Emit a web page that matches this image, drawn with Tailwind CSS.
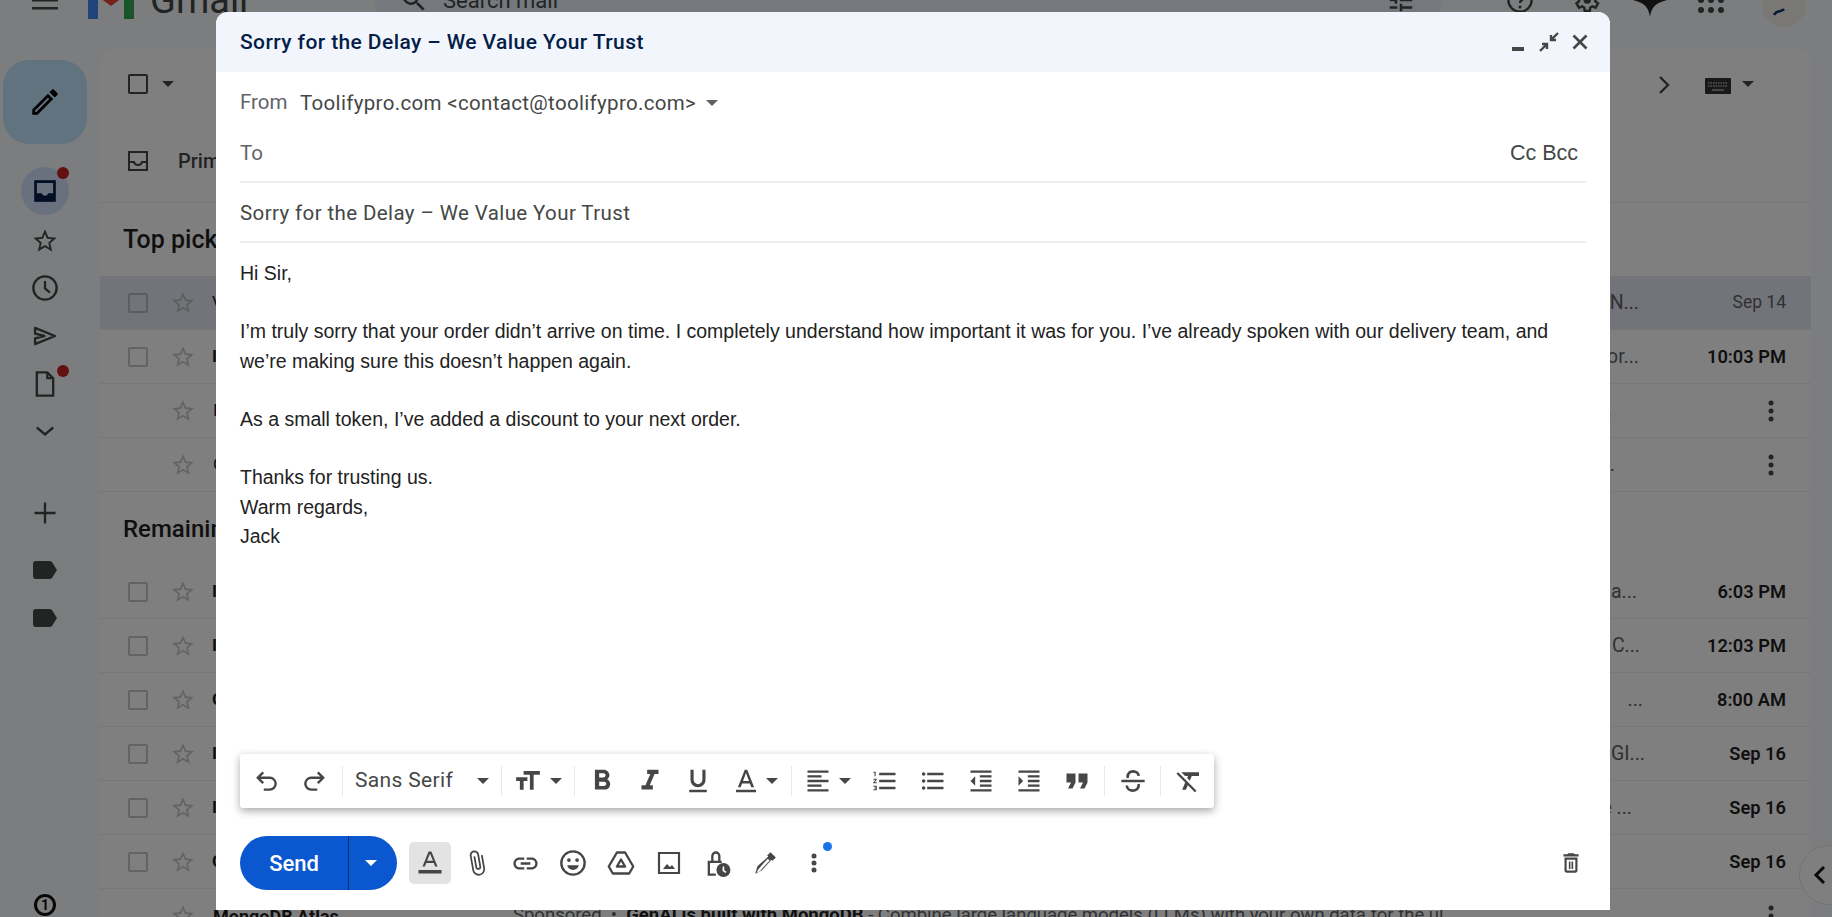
<!DOCTYPE html>
<html><head><meta charset="utf-8"><script src="https://cdn.jsdelivr.net/npm/@tailwindcss/browser@4"></script></head>
<body class="overflow-hidden">
<div class="relative w-[1832px] h-[917px] overflow-hidden bg-[#f8fafd] font-['Roboto',sans-serif] text-[#1f1f1f]">

<!-- top bar, scrolled mostly out of view -->
<header class="-mt-[30px] h-[60px] flex items-center text-[#444746]">
  <div class="w-[32px] shrink-0"></div>
  <svg class="w-[26px] h-[20px] shrink-0" viewBox="0 0 26 20"><path d="M0 1h26v2.600H0zM0 9h26v2.600H0zM0 17h26v2.600H0z" fill="#444746"/></svg>
  <svg class="w-[46px] h-[36px] ml-[30px] mt-[2px] shrink-0" viewBox="0 0 46 36"><path d="M0 4v32h10V12z" fill="#4285f4"/><path d="M36 12v24h10V4z" fill="#34a853"/><path d="M0 0v6l23 17L46 6V0L36 0 23 10 10 0z" fill="#ea4335"/></svg>
  <span class="ml-[16px] w-[225px] shrink-0 text-[38px] leading-none text-[#444746]">Gmail</span>
  <div class="w-[1067px] h-[56px] shrink-0 rounded-full bg-[#eaf1fb] flex items-center pl-[24px] pr-[26px]">
    <svg class="w-[30px] h-[30px] shrink-0" viewBox="0 0 24 24"><path d="M15.500 14h-.79l-.28-.27A6.470 6.470 0 0 0 16 9.500 6.500 6.500 0 1 0 9.500 16c1.610 0 3.090-.59 4.230-1.570l.27.28v.79l5 4.990L20.490 19l-4.990-5zm-6 0C7.010 14 5 11.990 5 9.500S7.010 5 9.500 5 14 7.010 14 9.500 11.990 14 9.500 14z" fill="#444746"/></svg>
    <span class="ml-[14px] text-[22px]">Search mail</span>
    <svg class="ml-auto w-[30px] h-[30px] shrink-0" viewBox="0 0 24 24"><path d="M3 17v2h6v-2H3zM3 5v2h10V5H3zm10 16v-2h8v-2h-8v-2h-2v6h2zM7 9v2H3v2h4v2h2V9H7zm14 4v-2H11v2h10zm-6-4h2V7h4V5h-4V3h-2v6z" fill="#444746"/></svg>
  </div>
  <div class="w-[64px] shrink-0"></div>
  <svg class="w-[28px] h-[28px] shrink-0" viewBox="0 0 24 24"><circle cx="12" cy="12" r="10" fill="none" stroke="#444746" stroke-width="2"/><path d="M9 9.500a3 3 0 1 1 4.500 2.600c-1 .6-1.500 1.200-1.500 2.400" fill="none" stroke="#444746" stroke-width="2"/><circle cx="12" cy="18" r="1.300" fill="#444746"/></svg>
  <svg class="w-[30px] h-[30px] ml-[37px] shrink-0" viewBox="0 0 24 24"><path d="M19.400 13a7.600 7.600 0 0 0 0-2l2.100-1.600-2-3.500-2.500 1a7.500 7.500 0 0 0-1.700-1L15 3.200h-4l-.4 2.700a7.500 7.500 0 0 0-1.700 1l-2.500-1-2 3.500L6.500 11a7.600 7.600 0 0 0 0 2l-2.100 1.600 2 3.500 2.500-1a7.500 7.500 0 0 0 1.700 1l.4 2.700h4l.4-2.700a7.500 7.500 0 0 0 1.700-1l2.500 1 2-3.500z" fill="none" stroke="#444746" stroke-width="2"/><circle cx="13" cy="12" r="3" fill="#444746"/></svg>
  <svg class="w-[34px] h-[44px] ml-[32px] shrink-0" viewBox="0 0 24 24"><path d="M12 0c1 7 4 10 12 12-8 2-11 5-12 12-1-7-4-10-12-12 8-2 11-5 12-12z" fill="#222"/></svg>
  <svg class="w-[26px] h-[26px] ml-[31px] shrink-0" viewBox="0 0 26 26"><g fill="#444746"><circle cx="3" cy="3" r="3"/><circle cx="13" cy="3" r="3"/><circle cx="23" cy="3" r="3"/><circle cx="3" cy="13" r="3"/><circle cx="13" cy="13" r="3"/><circle cx="23" cy="13" r="3"/><circle cx="3" cy="23" r="3"/><circle cx="13" cy="23" r="3"/><circle cx="23" cy="23" r="3"/></g></svg>
  <div class="w-[44px] h-[44px] ml-[38px] mt-[10px] shrink-0 rounded-full bg-[#f3f1ea] flex justify-center"><svg class="w-[24px] h-[14px] mt-[20px]" viewBox="0 0 24 14"><path d="M2 12c3-6 7-2 10-6" fill="none" stroke="#12306b" stroke-width="2.500"/></svg></div>
</header>

<div class="flex h-[887px]">
  <!-- sidebar -->
  <aside class="w-[100px] shrink-0 relative h-full">
    <div class="absolute left-[3px] top-[30px] w-[84px] h-[84px] rounded-[26px] bg-[#c2e7ff] flex items-center justify-center">
      <svg class="w-[34px] h-[34px]" viewBox="0 0 24 24"><path d="M3 17.250V21h3.750L17.810 9.940l-3.750-3.750L3 17.250zM5.920 19H5v-.92l9.060-9.060.92.92L5.920 19zM20.710 5.630l-2.340-2.340c-.2-.2-.45-.29-.71-.29s-.51.1-.7.29l-1.830 1.830 3.750 3.750 1.830-1.830c.39-.39.39-1.020 0-1.410z" fill="#000"/></svg>
    </div>
    <div class="absolute left-[21px] top-[137px] w-[48px] h-[48px] rounded-full bg-[#d3e3fd] flex items-center justify-center">
      <svg class="w-[26px] h-[26px]" viewBox="0 0 24 24"><path d="M2 2h20v20H2z" fill="#041e49"/><path d="M4.500 4.500h15v9.500h-4.500c-.5 1.500-1.500 2.300-3 2.300s-2.500-.8-3-2.300H4.500z" fill="#d3e3fd"/></svg>
      <div class="absolute left-[36px] top-[0px] w-[12px] h-[12px] rounded-full bg-[#c5221f]"></div>
    </div>
    <svg class="absolute left-[31px] top-[197px] w-[28px] h-[28px]" viewBox="0 0 24 24"><path d="M22 9.240l-7.190-.62L12 2 9.190 8.630 2 9.240l5.460 4.730L5.820 21 12 17.270 18.180 21l-1.630-7.030L22 9.240zM12 15.400l-3.760 2.270 1-4.280-3.320-2.880 4.380-.38L12 6.100l1.710 4.040 4.380.38-3.320 2.880 1 4.280L12 15.400z" fill="#444746"/></svg>
    <svg class="absolute left-[31px] top-[244px] w-[28px] h-[28px]" viewBox="0 0 24 24"><circle cx="12" cy="12" r="10" fill="none" stroke="#444746" stroke-width="2"/><path d="M12 6v6.300l4.200 3.700" fill="none" stroke="#444746" stroke-width="2"/></svg>
    <svg class="absolute left-[31px] top-[292px] w-[28px] h-[28px]" viewBox="0 0 24 24"><path d="M3.500 5l17 7-17 7V14l8-2-8-2z" fill="none" stroke="#444746" stroke-width="2" stroke-linejoin="round"/></svg>
    <svg class="absolute left-[31px] top-[340px] w-[28px] h-[28px]" viewBox="0 0 24 24"><path d="M5 2h9l5 5v15H5z M14 2v5h5" fill="none" stroke="#444746" stroke-width="2"/></svg>
    <div class="absolute left-[57px] top-[335px] w-[12px] h-[12px] rounded-full bg-[#c5221f]"></div>
    <svg class="absolute left-[31px] top-[387px] w-[28px] h-[28px]" viewBox="0 0 24 24"><path d="M5 9l7 6 7-6" fill="none" stroke="#444746" stroke-width="2"/></svg>
    <svg class="absolute left-[31px] top-[469px] w-[28px] h-[28px]" viewBox="0 0 24 24"><path d="M12 3v18M3 12h18" fill="none" stroke="#444746" stroke-width="2"/></svg>
    <svg class="absolute left-[33px] top-[530px] w-[24px] h-[20px]" viewBox="0 0 24 20"><path d="M3 1h13q2 0 3 1l5 8-5 8q-1 1-3 1H3q-3 0-3-3V4q0-3 3-3z" fill="#444746"/></svg>
    <svg class="absolute left-[33px] top-[578px] w-[24px] h-[20px]" viewBox="0 0 24 20"><path d="M3 1h13q2 0 3 1l5 8-5 8q-1 1-3 1H3q-3 0-3-3V4q0-3 3-3z" fill="#444746"/></svg>
    <div class="absolute left-[34px] top-[864px] w-[22px] h-[22px] rounded-full border-[3px] border-[#111] flex items-center justify-center text-[14px] font-bold leading-none text-[#111]">1</div>
  </aside>

  <!-- mail list -->
  <main class="w-[1711px] shrink-0 rounded-t-[18px] bg-white mt-[18px] h-[869px] overflow-hidden">
    <div class="h-[72px] flex items-center pl-[28px] pr-[57px]">
      <div class="w-[20px] h-[20px] border-2 border-[#444746] rounded-[2px]"></div>
      <svg class="w-[12px] h-[6px] ml-[14px]" viewBox="0 0 12 6"><path d="M0 0h12L6 6z" fill="#444746"/></svg>
      <svg class="w-[18px] h-[22px] ml-auto mr-[3px] mt-[1px]" viewBox="0 0 18 22"><path d="M5 3l8 8-8 8" fill="none" stroke="#444746" stroke-width="2.400"/></svg>
      <svg class="w-[26px] h-[16px] ml-[29px] mt-[3px]" viewBox="0 0 26 16"><rect width="26" height="16" rx="1" fill="#333"/><path d="M3 5h20M3 8h20" stroke="#aaa" stroke-width="1.500" stroke-dasharray="1.500 1"/><path d="M7 12h12" stroke="#aaa" stroke-width="1.500"/></svg>
      <svg class="w-[12px] h-[6px] ml-[11px]" viewBox="0 0 12 6"><path d="M0 0h12L6 6z" fill="#444746"/></svg>
    </div>
    <div class="h-[83px] flex items-center pl-[28px] border-b border-[#eceef1]">
      <svg class="w-[20px] h-[20px]" viewBox="0 0 20 20"><path d="M1 1h18v18H1zM1 11h5c.5 2 2 3 4 3s3.500-1 4-3h5" fill="none" stroke="#444746" stroke-width="2"/></svg>
      <span class="ml-[30px] text-[20px] font-medium text-[#444746]">Primary</span>
    </div>
    <div class="h-[73px] flex items-center pl-[23px] text-[25px] font-medium">Top picks</div>

    <div class="h-[54px] flex items-center pl-[28px] pr-[25px] bg-[#e4e9f2] border-b border-[#eceef1]">
      <div class="w-[20px] h-[20px] border-2 border-[#b8bbbf] rounded-[2px]"></div>
      <svg class="w-[26px] h-[26px] ml-[22px] shrink-0" viewBox="0 0 24 24"><path d="M22 9.240l-7.190-.62L12 2 9.190 8.630 2 9.240l5.460 4.730L5.820 21 12 17.270 18.180 21l-1.630-7.030L22 9.240zM12 15.400l-3.760 2.270 1-4.280-3.320-2.880 4.380-.38L12 6.100l1.710 4.040 4.380.38-3.320 2.880 1 4.280L12 15.400z" fill="#b8bbbf"/></svg>
      <span class="ml-[16px] w-[100px] shrink-0 text-[17px]">V</span>
      <span class="flex-1 text-right text-[19.500px] text-[#5f6368] truncate">N...</span>
      <span class="w-[147px] shrink-0 text-right text-[17.500px] text-[#5f6368]">Sep 14</span>
    </div>
    <div class="h-[54px] flex items-center pl-[28px] pr-[25px] border-b border-[#eceef1]">
      <div class="w-[20px] h-[20px] border-2 border-[#c4c7c9] rounded-[2px]"></div>
      <svg class="w-[26px] h-[26px] ml-[22px] shrink-0" viewBox="0 0 24 24"><path d="M22 9.240l-7.190-.62L12 2 9.190 8.630 2 9.240l5.460 4.730L5.820 21 12 17.270 18.180 21l-1.630-7.030L22 9.240zM12 15.400l-3.760 2.270 1-4.280-3.320-2.880 4.380-.38L12 6.100l1.710 4.040 4.380.38-3.320 2.880 1 4.280L12 15.400z" fill="#c4c7c9"/></svg>
      <span class="ml-[16px] w-[100px] shrink-0 text-[17px] font-bold">I</span>
      <span class="flex-1 text-right text-[19.500px] text-[#5f6368] truncate">or...</span>
      <span class="w-[147px] shrink-0 text-right text-[18.300px] font-semibold">10:03 PM</span>
    </div>
    <div class="h-[54px] flex items-center pl-[76px] pr-[37px] border-b border-[#eceef1]">
      <svg class="w-[26px] h-[26px] -ml-[6px] shrink-0" viewBox="0 0 24 24"><path d="M22 9.240l-7.190-.62L12 2 9.190 8.630 2 9.240l5.460 4.730L5.820 21 12 17.270 18.180 21l-1.630-7.030L22 9.240zM12 15.400l-3.760 2.270 1-4.280-3.320-2.880 4.380-.38L12 6.100l1.710 4.040 4.380.38-3.320 2.880 1 4.280L12 15.400z" fill="#c4c7c9"/></svg>
      <span class="ml-[17px] w-[100px] shrink-0 text-[17px]">I</span>
      <span class="flex-1 text-right text-[19.500px] text-[#5f6368] truncate">...</span>
      <div class="w-[162px] shrink-0 flex justify-end"><svg class="w-[6px] h-[22px]" viewBox="0 0 6 22"><g fill="#444746"><circle cx="3" cy="3" r="2.500"/><circle cx="3" cy="11" r="2.500"/><circle cx="3" cy="19" r="2.500"/></g></svg></div>
    </div>
    <div class="h-[54px] flex items-center pl-[76px] pr-[37px] border-b border-[#eceef1]">
      <svg class="w-[26px] h-[26px] -ml-[6px] shrink-0" viewBox="0 0 24 24"><path d="M22 9.240l-7.190-.62L12 2 9.190 8.630 2 9.240l5.460 4.730L5.820 21 12 17.270 18.180 21l-1.630-7.030L22 9.240zM12 15.400l-3.760 2.270 1-4.280-3.320-2.880 4.380-.38L12 6.100l1.710 4.040 4.380.38-3.320 2.880 1 4.280L12 15.400z" fill="#c4c7c9"/></svg>
      <span class="ml-[17px] w-[100px] shrink-0 text-[17px]">G</span>
      <span class="flex-1 text-right text-[19.500px] text-[#5f6368] truncate">...</span>
      <div class="w-[159px] shrink-0 flex justify-end"><svg class="w-[6px] h-[22px]" viewBox="0 0 6 22"><g fill="#444746"><circle cx="3" cy="3" r="2.500"/><circle cx="3" cy="11" r="2.500"/><circle cx="3" cy="19" r="2.500"/></g></svg></div>
    </div>

    <div class="h-[73px] flex items-center pl-[23px] text-[24px] font-medium">Remaining</div>

    <div class="h-[54px] flex items-center pl-[28px] pr-[25px] border-b border-[#eceef1]">
      <div class="w-[20px] h-[20px] border-2 border-[#c4c7c9] rounded-[2px]"></div>
      <svg class="w-[26px] h-[26px] ml-[22px] shrink-0" viewBox="0 0 24 24"><path d="M22 9.240l-7.190-.62L12 2 9.190 8.630 2 9.240l5.460 4.730L5.820 21 12 17.270 18.180 21l-1.630-7.030L22 9.240zM12 15.400l-3.760 2.270 1-4.280-3.320-2.880 4.380-.38L12 6.100l1.710 4.040 4.380.38-3.320 2.880 1 4.280L12 15.400z" fill="#c4c7c9"/></svg>
      <span class="ml-[16px] w-[100px] shrink-0 text-[17px] font-bold">I</span>
      <span class="flex-1 text-right text-[19.500px] text-[#5f6368] truncate">a...</span>
      <span class="w-[149px] shrink-0 text-right text-[18.300px] font-semibold">6:03 PM</span>
    </div>
    <div class="h-[54px] flex items-center pl-[28px] pr-[25px] border-b border-[#eceef1]">
      <div class="w-[20px] h-[20px] border-2 border-[#c4c7c9] rounded-[2px]"></div>
      <svg class="w-[26px] h-[26px] ml-[22px] shrink-0" viewBox="0 0 24 24"><path d="M22 9.240l-7.190-.62L12 2 9.190 8.630 2 9.240l5.460 4.730L5.820 21 12 17.270 18.180 21l-1.630-7.030L22 9.240zM12 15.400l-3.760 2.270 1-4.280-3.320-2.880 4.380-.38L12 6.100l1.710 4.040 4.380.38-3.320 2.880 1 4.280L12 15.400z" fill="#c4c7c9"/></svg>
      <span class="ml-[16px] w-[100px] shrink-0 text-[17px] font-bold">I</span>
      <span class="flex-1 text-right text-[19.500px] text-[#5f6368] truncate">C...</span>
      <span class="w-[146px] shrink-0 text-right text-[18.300px] font-semibold">12:03 PM</span>
    </div>
    <div class="h-[54px] flex items-center pl-[28px] pr-[25px] border-b border-[#eceef1]">
      <div class="w-[20px] h-[20px] border-2 border-[#c4c7c9] rounded-[2px]"></div>
      <svg class="w-[26px] h-[26px] ml-[22px] shrink-0" viewBox="0 0 24 24"><path d="M22 9.240l-7.190-.62L12 2 9.190 8.630 2 9.240l5.460 4.730L5.820 21 12 17.270 18.180 21l-1.630-7.030L22 9.240zM12 15.400l-3.760 2.270 1-4.280-3.320-2.880 4.380-.38L12 6.100l1.710 4.040 4.380.38-3.320 2.880 1 4.280L12 15.400z" fill="#c4c7c9"/></svg>
      <span class="ml-[16px] w-[100px] shrink-0 text-[17px] font-bold">G</span>
      <span class="flex-1 text-right text-[19.500px] text-[#5f6368] truncate">...</span>
      <span class="w-[143px] shrink-0 text-right text-[18.300px] font-semibold">8:00 AM</span>
    </div>
    <div class="h-[54px] flex items-center pl-[28px] pr-[25px] border-b border-[#eceef1]">
      <div class="w-[20px] h-[20px] border-2 border-[#c4c7c9] rounded-[2px]"></div>
      <svg class="w-[26px] h-[26px] ml-[22px] shrink-0" viewBox="0 0 24 24"><path d="M22 9.240l-7.190-.62L12 2 9.190 8.630 2 9.240l5.460 4.730L5.820 21 12 17.270 18.180 21l-1.630-7.030L22 9.240zM12 15.400l-3.760 2.270 1-4.280-3.320-2.880 4.380-.38L12 6.100l1.710 4.040 4.380.38-3.320 2.880 1 4.280L12 15.400z" fill="#c4c7c9"/></svg>
      <span class="ml-[16px] w-[100px] shrink-0 text-[17px] font-bold">I</span>
      <span class="flex-1 text-right text-[19.500px] text-[#5f6368] truncate">GI...</span>
      <span class="w-[141px] shrink-0 text-right text-[18.300px] font-semibold">Sep 16</span>
    </div>
    <div class="h-[54px] flex items-center pl-[28px] pr-[25px] border-b border-[#eceef1]">
      <div class="w-[20px] h-[20px] border-2 border-[#c4c7c9] rounded-[2px]"></div>
      <svg class="w-[26px] h-[26px] ml-[22px] shrink-0" viewBox="0 0 24 24"><path d="M22 9.240l-7.190-.62L12 2 9.190 8.630 2 9.240l5.460 4.730L5.820 21 12 17.270 18.180 21l-1.630-7.030L22 9.240zM12 15.400l-3.760 2.270 1-4.280-3.320-2.880 4.380-.38L12 6.100l1.710 4.040 4.380.38-3.320 2.880 1 4.280L12 15.400z" fill="#c4c7c9"/></svg>
      <span class="ml-[16px] w-[100px] shrink-0 text-[17px] font-bold">I</span>
      <span class="flex-1 text-right text-[19.500px] text-[#5f6368] truncate">e ...</span>
      <span class="w-[154px] shrink-0 text-right text-[18.300px] font-semibold">Sep 16</span>
    </div>
    <div class="h-[54px] flex items-center pl-[28px] pr-[25px] border-b border-[#eceef1]">
      <div class="w-[20px] h-[20px] border-2 border-[#c4c7c9] rounded-[2px]"></div>
      <svg class="w-[26px] h-[26px] ml-[22px] shrink-0" viewBox="0 0 24 24"><path d="M22 9.240l-7.190-.62L12 2 9.190 8.630 2 9.240l5.460 4.730L5.820 21 12 17.270 18.180 21l-1.630-7.030L22 9.240zM12 15.400l-3.760 2.270 1-4.280-3.320-2.880 4.380-.38L12 6.100l1.710 4.040 4.380.38-3.320 2.880 1 4.280L12 15.400z" fill="#c4c7c9"/></svg>
      <span class="ml-[16px] w-[100px] shrink-0 text-[17px] font-bold">G</span>
      <span class="flex-1"></span>
      <span class="w-[141px] shrink-0 text-right text-[18.300px] font-semibold">Sep 16</span>
    </div>
    <div class="h-[54px] flex items-center pl-[76px] pr-[37px] whitespace-nowrap">
      <svg class="w-[26px] h-[26px] -ml-[6px] shrink-0" viewBox="0 0 24 24"><path d="M22 9.240l-7.190-.62L12 2 9.190 8.630 2 9.240l5.460 4.730L5.820 21 12 17.270 18.180 21l-1.630-7.030L22 9.240zM12 15.400l-3.760 2.270 1-4.280-3.320-2.880 4.380-.38L12 6.100l1.710 4.040 4.380.38-3.320 2.880 1 4.280L12 15.400z" fill="#c4c7c9"/></svg>
      <span class="ml-[17px] w-[300px] shrink-0 text-[18px] font-bold">MongoDB Atlas</span>
      <span class="text-[18.500px] text-[#5f6368] truncate flex-1">Sponsored &nbsp;•&nbsp; <b class="text-[#1f1f1f]">GenAI is built with MongoDB</b> - Combine large language models (LLMs) with your own data for the ul</span>
      <svg class="w-[6px] h-[22px] shrink-0 ml-[12px]" viewBox="0 0 6 22"><g fill="#444746"><circle cx="3" cy="3" r="2.500"/><circle cx="3" cy="11" r="2.500"/><circle cx="3" cy="19" r="2.500"/></g></svg>
    </div>
  </main>
  <div class="flex-1"></div>
</div>

<!-- collapse tab -->
<div class="absolute left-[1799px] top-[845px] w-[60px] h-[60px] rounded-full bg-white border border-[#e6e6e6] flex items-center pl-[12px]">
  <svg class="w-[16px] h-[20px]" viewBox="0 0 16 20"><path d="M12 2l-8 8 8 8" fill="none" stroke="#111" stroke-width="3"/></svg>
</div>

<!-- dim -->
<div class="absolute inset-0 bg-black/50"></div>

<!-- compose window -->
<section class="absolute left-[216px] top-[12px] w-[1394px] h-[898px] bg-white rounded-t-[12px] flex flex-col font-['Roboto',sans-serif] overflow-hidden">
  <div class="h-[60px] shrink-0 bg-[#f2f6fc] flex items-center pl-[24px] pr-[22px]">
    <span class="pt-[2px] text-[21px] tracking-[0.4px] font-medium text-[#041e49]">Sorry for the Delay – We Value Your Trust</span>
    <svg class="ml-auto w-[14px] h-[14px] mt-[11px]" viewBox="0 0 14 14"><path d="M1 6h12v4H1z" fill="#444746"/></svg>
    <svg class="ml-[14px] w-[20px] h-[20px]" viewBox="0 0 20 20"><path d="M19 1l-7 7M12 3v5h5M1 19l7-7M3 12h5v5" fill="none" stroke="#444746" stroke-width="2.400"/></svg>
    <svg class="ml-[13px] w-[16px] h-[16px]" viewBox="0 0 16 16"><path d="M1.500 1.500l13 13M14.500 1.500l-13 13" fill="none" stroke="#444746" stroke-width="2.600"/></svg>
  </div>

  <div class="px-[24px] flex-1 flex flex-col min-h-0">
    <div class="h-[62px] shrink-0 flex items-center">
      <span class="text-[20.500px] text-[#5f6368] w-[60px] -mt-[2px]">From</span>
      <span class="text-[20.500px] tracking-[0.33px] text-[#444746]">Toolifypro.com &lt;contact@toolifypro.com&gt;</span>
      <svg class="ml-[10px] w-[12px] h-[6px]" viewBox="0 0 12 6"><path d="M0 0h12L6 6z" fill="#5f6368"/></svg>
    </div>
    <div class="h-[49px] shrink-0 flex items-center pb-[8px] border-b-2 border-[#eeeeee]">
      <span class="text-[20.500px] text-[#5f6368]">To</span>
      <span class="ml-auto mr-[8px] font-['Liberation_Sans',sans-serif] text-[21.500px] text-[#444746]">Cc Bcc</span>
    </div>
    <div class="h-[60px] shrink-0 flex items-center pt-[3px] border-b-2 border-[#eeeeee] text-[20.500px] tracking-[0.39px] text-[#444746]">Sorry for the Delay – We Value Your Trust</div>
    <div class="pt-[16px] font-['Liberation_Sans',sans-serif] text-[19.500px] leading-[29.200px] text-[#222222]">
      <div>Hi Sir,</div>
      <div class="h-[29.200px]"></div>
      <div>I’m truly sorry that your order didn’t arrive on time. I completely understand how important it was for you. I’ve already spoken with our delivery team, and<br>we’re making sure this doesn’t happen again.</div>
      <div class="h-[29.200px]"></div>
      <div>As a small token, I’ve added a discount to your next order.</div>
      <div class="h-[29.200px]"></div>
      <div>Thanks for trusting us.</div>
      <div>Warm regards,</div>
      <div>Jack</div>
    </div>

    <!-- format toolbar -->
    <div class="mt-auto w-[974px] h-[54px] shrink-0 rounded-[3px] bg-white shadow-[0_3px_8px_rgba(0,0,0,0.35)] flex items-center pl-[3px]">
      <span class="w-[47px] flex justify-center"><svg class="w-[26px] h-[26px]" viewBox="0 0 24 24"><path d="M8.500 14L3.500 9l5-5M3.500 9h11a5.500 5.500 0 0 1 0 11H9" fill="none" stroke="#444746" stroke-width="2.200"/></svg></span>
      <span class="w-[47px] flex justify-center"><svg class="w-[26px] h-[26px]" viewBox="0 0 24 24"><path d="M15.500 14l5-5-5-5M20.500 9h-11a5.500 5.500 0 0 0 0 11H15" fill="none" stroke="#444746" stroke-width="2.200"/></svg></span>
      <span class="ml-[5px] w-px h-[30px] bg-[#e8e8e8]"></span>
      <span class="ml-[12px] w-[118px] text-[21px] tracking-[0.35px] text-[#444746]">Sans Serif</span>
      <span class="w-[20px] flex justify-center"><svg class="w-[12px] h-[6px]" viewBox="0 0 12 6"><path d="M0 0h12L6 6z" fill="#444746"/></svg></span>
      <span class="ml-[8px] w-px h-[30px] bg-[#e8e8e8]"></span>
      <svg class="ml-[11px] w-[30px] h-[30px]" viewBox="0 0 24 24"><g transform="matrix(-1 0 0 1 24 0)"><path d="M2.500 4v3h5v12h3V7h5V4h-13zm19 5h-9v3h3v7h3v-7h3V9z" fill="#444746"/></g></svg>
      <span class="ml-[3px] w-[20px] flex justify-center"><svg class="w-[12px] h-[6px]" viewBox="0 0 12 6"><path d="M0 0h12L6 6z" fill="#444746"/></svg></span>
      <span class="ml-[8px] w-px h-[30px] bg-[#e8e8e8]"></span>
      <span class="ml-[3px] w-[48px] flex justify-center"><svg class="w-[34px] h-[34px]" viewBox="0 0 24 24"><path d="M15.600 10.790c.97-.67 1.650-1.770 1.650-2.790 0-2.260-1.750-4-4-4H7v14h7.040c2.090 0 3.710-1.700 3.710-3.790 0-1.520-.86-2.820-2.150-3.420zM10 6.500h3c.83 0 1.500.67 1.500 1.500s-.67 1.500-1.500 1.500h-3v-3zm3.500 9H10v-3h3.500c.83 0 1.500.67 1.500 1.500s-.67 1.500-1.500 1.500z" fill="#444746"/></svg></span>
      <span class="w-[48px] flex justify-center"><svg class="w-[34px] h-[34px]" viewBox="0 0 24 24"><path d="M10 4v3h2.210l-3.420 8H6v3h8v-3h-2.210l3.420-8H18V4z" fill="#444746"/></svg></span>
      <span class="w-[48px] flex justify-center"><svg class="w-[30px] h-[30px]" viewBox="0 0 24 24"><path d="M12 17c3.310 0 6-2.690 6-6V3h-2.500v8c0 1.930-1.570 3.500-3.500 3.500S8.500 12.930 8.500 11V3H6v8c0 3.310 2.690 6 6 6zm-7 2v2h14v-2H5z" fill="#444746"/></svg></span>
      <span class="ml-[6px] w-[36px] flex justify-center"><svg class="w-[30px] h-[30px]" viewBox="0 0 24 24"><path d="M11 3L5.500 17h2.250l1.120-3h6.250l1.120 3h2.250L13 3h-2zm-1.380 9L12 5.670 14.380 12H9.620zM4 19h16v2H4z" fill="#444746"/></svg></span>
      <span class="-ml-[2px] w-[20px] flex justify-center"><svg class="w-[12px] h-[6px]" viewBox="0 0 12 6"><path d="M0 0h12L6 6z" fill="#444746"/></svg></span>
      <span class="ml-[9px] w-px h-[30px] bg-[#e8e8e8]"></span>
      <svg class="ml-[12px] w-[28px] h-[28px]" viewBox="0 0 24 24"><path d="M15 15H3v2h12v-2zm0-8H3v2h12V7zM3 13h18v-2H3v2zm0 8h18v-2H3v2zM3 3v2h18V3H3z" fill="#444746"/></svg>
      <span class="ml-[3px] w-[20px] flex justify-center"><svg class="w-[12px] h-[6px]" viewBox="0 0 12 6"><path d="M0 0h12L6 6z" fill="#444746"/></svg></span>
      <span class="ml-[6px] w-[48px] flex justify-center"><svg class="w-[28px] h-[28px]" viewBox="0 0 24 24"><path d="M2 17h2v.5H3v1h1v.5H2v1h3v-4H2v1zm1-9h1V4H2v1h1v3zm-1 3h1.800L2 13.100v.9h3v-1H3.200L5 10.900V10H2v1zm5-6v2h14V5H7zm0 14h14v-2H7v2zm0-6h14v-2H7v2z" fill="#444746"/></svg></span>
      <span class="w-[48px] flex justify-center"><svg class="w-[28px] h-[28px]" viewBox="0 0 24 24"><path d="M4 10.500c-.83 0-1.500.67-1.500 1.500s.67 1.500 1.500 1.500 1.500-.67 1.500-1.500-.67-1.500-1.500-1.500zm0-6c-.83 0-1.500.67-1.500 1.500S3.170 7.500 4 7.500 5.500 6.830 5.500 6 4.830 4.500 4 4.500zm0 12c-.83 0-1.500.68-1.500 1.500s.68 1.500 1.500 1.500 1.500-.68 1.500-1.500-.67-1.500-1.500-1.500zM7 19h14v-2H7v2zm0-6h14v-2H7v2zm0-8v2h14V5H7z" fill="#444746"/></svg></span>
      <span class="w-[48px] flex justify-center"><svg class="w-[28px] h-[28px]" viewBox="0 0 24 24"><path d="M11 17h10v-2H11v2zm-8-5l4 4V8l-4 4zm0 9h18v-2H3v2zM3 3v2h18V3H3zm8 6h10V7H11v2zm0 4h10v-2H11v2z" fill="#444746"/></svg></span>
      <span class="w-[48px] flex justify-center"><svg class="w-[28px] h-[28px]" viewBox="0 0 24 24"><path d="M3 21h18v-2H3v2zM3 8v8l4-4-4-4zm8 9h10v-2H11v2zM3 3v2h18V3H3zm8 6h10V7H11v2zm0 4h10v-2H11v2z" fill="#444746"/></svg></span>
      <span class="w-[48px] flex justify-center"><svg class="w-[36px] h-[36px]" viewBox="0 0 24 24"><path d="M6 17h3l2-4V7H5v6h3zm8 0h3l2-4V7h-6v6h3z" fill="#444746"/></svg></span>
      <span class="ml-[3px] w-px h-[30px] bg-[#e8e8e8]"></span>
      <span class="ml-[4px] w-[47px] flex justify-center"><svg class="w-[28px] h-[28px]" viewBox="0 0 24 24"><path d="M2 12h20M7.500 9.500C6.800 5.500 9.500 3.800 12 3.800c2.600 0 4.700 1.500 4.900 3.900M16.800 14.500c.7 3.700-2 5.700-4.800 5.700-2.900 0-5.200-1.700-5.300-4.400" fill="none" stroke="#444746" stroke-width="2.300"/></svg></span>
      <span class="ml-[4px] w-px h-[30px] bg-[#e8e8e8]"></span>
      <span class="ml-[4px] w-[47px] flex justify-center"><svg class="w-[30px] h-[30px]" viewBox="0 0 24 24"><path d="M3.270 5L2 6.270l6.970 6.970L6.500 19h3l1.570-3.660L16.730 21 18 19.730 3.550 5.270 3.270 5zM6 5v.18L8.820 8h2.400l-.72 1.680 2.100 2.100L14.210 8H20V5H6z" fill="#444746"/></svg></span>
    </div>

    <!-- send row -->
    <div class="mt-[28px] mb-[20px] h-[54px] shrink-0 flex items-center -mr-[9px]">
      <div class="w-[157px] h-[54px] rounded-full bg-[#0b57d0] flex items-center text-white shrink-0">
        <span class="w-[108px] text-center text-[22px] font-medium">Send</span>
        <span class="w-px h-[54px] bg-[#062e6f]"></span>
        <span class="flex-1 flex justify-center pr-[4px]"><svg class="w-[12px] h-[6px]" viewBox="0 0 12 6"><path d="M0 0h12L6 6z" fill="#fff"/></svg></span>
      </div>
      <div class="ml-[12px] w-[42px] h-[42px] rounded-[5px] bg-[#e3e3e3] flex items-center justify-center shrink-0">
        <svg class="w-[28px] h-[30px]" viewBox="0 0 24 26"><path d="M10.800 3L5.500 16h2.100l1.100-3h6.600l1.100 3h2.100L13.200 3h-2.400zm-1.400 8L12 5l2.600 6H9.400zM2 19h20v3H2z" fill="#444746"/></svg>
      </div>
      <span class="ml-[2px] w-[48px] flex justify-center"><svg class="w-[28px] h-[28px] -rotate-[10deg]" viewBox="0 0 24 24"><path d="M16.500 6v11.500c0 2.210-1.790 4-4 4s-4-1.790-4-4V5c0-1.380 1.120-2.500 2.500-2.500s2.500 1.120 2.500 2.500v10.500c0 .55-.45 1-1 1s-1-.45-1-1V6H10v9.500c0 1.380 1.120 2.500 2.500 2.500s2.500-1.120 2.500-2.500V5c0-2.210-1.790-4-4-4S7 2.790 7 5v12.500c0 3.040 2.460 5.500 5.500 5.500s5.500-2.460 5.500-5.500V6h-1.500z" fill="#444746"/></svg></span>
      <span class="w-[48px] flex justify-center"><svg class="w-[29px] h-[29px]" viewBox="0 0 24 24"><path d="M3.900 12c0-1.710 1.390-3.100 3.100-3.100h4V7H7c-2.760 0-5 2.240-5 5s2.240 5 5 5h4v-1.900H7c-1.710 0-3.100-1.390-3.100-3.100zM8 13h8v-2H8v2zm9-6h-4v1.900h4c1.710 0 3.100 1.390 3.100 3.100s-1.390 3.100-3.100 3.100h-4V17h4c2.760 0 5-2.240 5-5s-2.240-5-5-5z" fill="#444746"/></svg></span>
      <span class="w-[48px] flex justify-center"><svg class="w-[28px] h-[28px]" viewBox="0 0 24 24"><circle cx="12" cy="12" r="10" fill="none" stroke="#444746" stroke-width="2"/><circle cx="8.500" cy="9.500" r="1.600" fill="#444746"/><circle cx="15.500" cy="9.500" r="1.600" fill="#444746"/><path d="M7 14h10c-.6 2.500-2.600 4-5 4s-4.400-1.500-5-4z" fill="#444746"/></svg></span>
      <span class="w-[48px] flex justify-center"><svg class="w-[28px] h-[28px]" viewBox="0 0 24 24"><path d="M8.500 3h7l7 12-3.500 6H5l-3.500-6zM12 9l3.500 6h-7z" fill="none" stroke="#444746" stroke-width="2" stroke-linejoin="round"/></svg></span>
      <span class="w-[48px] flex justify-center"><svg class="w-[24px] h-[24px]" viewBox="0 0 24 24"><path d="M2 2h20v20H2z" fill="none" stroke="#444746" stroke-width="2.200"/><path d="M6 18l4-5 3 3 2-2 3 4z" fill="#444746"/></svg></span>
      <span class="w-[48px] flex justify-center"><svg class="w-[28px] h-[28px]" viewBox="0 0 24 24"><path d="M4 10h12v2H6v9h5v2H4zM7 10V6a4 4 0 0 1 8 0v4h-2V6a2 2 0 0 0-4 0v4z" fill="#444746"/><circle cx="17.500" cy="18" r="6" fill="#444746"/><path d="M17.500 15v3.500l2.200 1.500" fill="none" stroke="#fff" stroke-width="1.400"/></svg></span>
      <span class="w-[48px] flex justify-center"><svg class="w-[26px] h-[26px]" viewBox="0 0 24 24"><path d="M17 2l5 5-3 3-1-1-9 10-6 3 2-7L15 6l-1-1z" fill="#444746"/><path d="M14.500 8l1.800 1.800-9 9.700-3 1.400 1.400-3z" fill="#fff"/></svg></span>
      <span class="relative w-[48px] flex justify-center pl-[2px]"><svg class="w-[6px] h-[20px]" viewBox="0 0 6 20"><g fill="#444746"><circle cx="3" cy="3" r="2.500"/><circle cx="3" cy="10" r="2.500"/><circle cx="3" cy="17" r="2.500"/></g></svg><span class="absolute left-[34px] -top-[11px] w-[9px] h-[9px] rounded-full bg-[#1a73e8]"></span></span>
      <span class="ml-auto w-[48px] flex justify-center"><svg class="w-[26px] h-[26px]" viewBox="0 0 24 24"><path d="M6 19c0 1.100.9 2 2 2h8c1.100 0 2-.9 2-2V7H6v12zM8 9h8v10H8V9zm7.500-5l-1-1h-5l-1 1H5v2h14V4zM10 10.500h1.500v7H10zM12.500 10.500H14v7h-1.500z" fill="#444746"/></svg></span>
    </div>
  </div>
</section>
</div>
</body></html>
